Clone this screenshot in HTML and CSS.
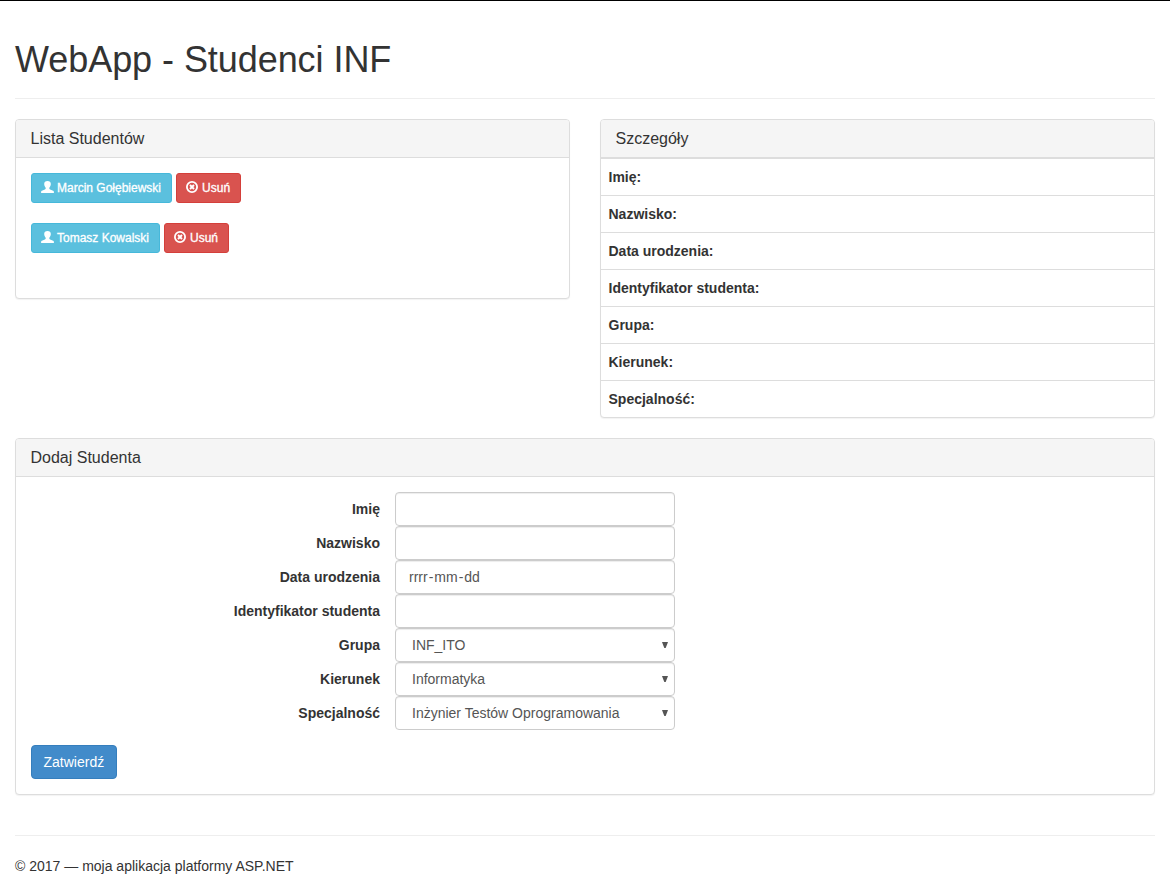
FILE: index.html
```html
<!DOCTYPE html>
<html lang="pl">
<head>
<meta charset="utf-8">
<title>WebApp - Studenci INF</title>
<link rel="stylesheet" href="styles.css">
</head>
<body>
<svg class="sprite" aria-hidden="true">
  <symbol id="user" viewBox="0 0 13 12"><path d="M6.5 0C8.6 0 9.9 1.2 9.8 3.1C9.7 4.7 9.2 5.9 8.3 6.7V7.6C8.3 8.1 8.6 8.4 9.1 8.6L11.5 9.5C12.4 9.8 12.9 10.3 12.9 11V12H.1V11C.1 10.3.6 9.8 1.5 9.5L3.9 8.6C4.4 8.4 4.7 8.1 4.7 7.6V6.7C3.8 5.9 3.3 4.7 3.2 3.1C3.1 1.2 4.4 0 6.5 0Z" fill="currentColor"/></symbol>
  <symbol id="remove" viewBox="0 0 12 12"><circle cx="6" cy="6" r="5.1" fill="none" stroke="currentColor" stroke-width="1.8"/><path d="M4 4L8 8M8 4L4 8" stroke="currentColor" stroke-width="1.9"/></symbol>
</svg>
<div class="container">
  <header class="page-header"><h1>WebApp - Studenci INF</h1></header>
  <div class="row">
    <section class="panel">
      <h3 class="panel-heading">Lista Studentów</h3>
      <div class="panel-body student-list">
        <div class="student">
          <button class="btn btn-sm btn-info"><svg class="icon icon-user"><use href="#user"/></svg><span class="btn-text">Marcin Gołębiewski</span></button>
          <button class="btn btn-sm btn-danger"><svg class="icon"><use href="#remove"/></svg><span class="btn-text">Usuń</span></button>
        </div>
        <div class="student">
          <button class="btn btn-sm btn-info"><svg class="icon icon-user"><use href="#user"/></svg><span class="btn-text">Tomasz Kowalski</span></button>
          <button class="btn btn-sm btn-danger"><svg class="icon"><use href="#remove"/></svg><span class="btn-text">Usuń</span></button>
        </div>
      </div>
    </section>
    <section class="panel">
      <h3 class="panel-heading">Szczegóły</h3>
      <div class="details">
        <div class="detail">Imię:</div>
        <div class="detail">Nazwisko:</div>
        <div class="detail">Data urodzenia:</div>
        <div class="detail">Identyfikator studenta:</div>
        <div class="detail">Grupa:</div>
        <div class="detail">Kierunek:</div>
        <div class="detail">Specjalność:</div>
      </div>
    </section>
  </div>
  <section class="panel">
    <h3 class="panel-heading">Dodaj Studenta</h3>
    <form class="panel-body">
      <div class="form-row"><label class="label" for="imie">Imię</label><input class="control" id="imie"></div>
      <div class="form-row"><label class="label" for="nazwisko">Nazwisko</label><input class="control" id="nazwisko"></div>
      <div class="form-row"><span class="label">Data urodzenia</span><div class="control date"><span class="date-field">rrrr</span>-<span class="date-field">mm</span>-<span class="date-field">dd</span></div></div>
      <div class="form-row"><label class="label" for="ident">Identyfikator studenta</label><input class="control" id="ident"></div>
      <div class="form-row"><span class="label">Grupa</span><div class="control select">INF_ITO<svg class="arrow" viewBox="0 0 6 6"><path d="M0 0H6L3.7 6H2.3Z" fill="currentColor"/></svg></div></div>
      <div class="form-row"><span class="label">Kierunek</span><div class="control select">Informatyka<svg class="arrow" viewBox="0 0 6 6"><path d="M0 0H6L3.7 6H2.3Z" fill="currentColor"/></svg></div></div>
      <div class="form-row"><span class="label">Specjalność</span><div class="control select">Inżynier Testów Oprogramowania<svg class="arrow" viewBox="0 0 6 6"><path d="M0 0H6L3.7 6H2.3Z" fill="currentColor"/></svg></div></div>
      <button class="btn btn-primary" type="button">Zatwierdź</button>
    </form>
  </section>
  <footer class="footer">© 2017 — moja aplikacja platformy ASP.NET</footer>
</div>
</body>
</html>
```
FILE: styles.css
```css
* { box-sizing: border-box; }
body {
  margin: 0;
  height: 886px;
  overflow: hidden;
  border-top: 1px solid #000;
  background: #fff;
  color: #333;
  font: 14px/20px "Liberation Sans", Arial, sans-serif;
}
h1, h3 { margin: 0; font-weight: 400; }
.sprite { display: none; }
.container { padding: 0 15px; }
.page-header {
  height: 98px;
  padding-top: 39px;
  border-bottom: 1px solid #eee;
  margin-bottom: 20px;
}
.page-header h1 { font-size: 36px; line-height: 40px; letter-spacing: -.06px; }
.row {
  display: grid;
  grid-template-columns: 1fr 1fr;
  gap: 30px;
  align-items: start;
  margin-bottom: 20px;
}
.panel {
  border: 1px solid #ddd;
  border-radius: 4px;
  background: #fff;
  box-shadow: 0 1px 1px rgba(0, 0, 0, .05);
}
.panel-heading {
  height: 38px;
  padding: 10px 14.5px;
  border-bottom: 1px solid #ddd;
  border-radius: 3px 3px 0 0;
  background: #f5f5f5;
  font-size: 16px;
  line-height: 18px;
}
.panel-body { padding: 15px; }
.student-list {
  display: flex;
  flex-direction: column;
  gap: 20px;
  height: 140px;
}
.student { display: flex; gap: 4px; }
.btn {
  display: inline-flex;
  align-items: center;
  height: 34px;
  padding: 0 12px;
  border: 1px solid transparent;
  border-radius: 4px;
  color: #fff;
  font: 14px/20px "Liberation Sans", Arial, sans-serif;
}
.btn-sm {
  height: 30px;
  padding: 0 10px 0 9px;
  border-radius: 3px;
  font-size: 12px;
  line-height: 18px;
}
.btn-info { background: #5bc0de; border-color: #46b8da; }
.btn-danger { background: #d9534f; border-color: #d43f3a; }
.btn-primary { margin-top: 15px; padding: 0 11.5px; background: #428bca; border-color: #357ebd; }
.icon { width: 12px; height: 12px; margin: 0 4px 2px 0; }
.icon-user { width: 13px; margin-right: 3px; }
.btn-text { -webkit-text-stroke: .3px currentColor; }
.detail {
  height: 37px;
  padding: 8px 7.5px;
  border-top: 1px solid #ddd;
  font-weight: 700;
}
.form-row {
  display: grid;
  grid-template-columns: 349px 280px;
  column-gap: 15px;
  height: 34px;
}
.label { padding-top: 7px; text-align: right; font-weight: 700; }
.control {
  width: 280px;
  height: 34px;
  padding: 6px 12px;
  border: 1px solid #ccc;
  border-radius: 4px;
  background: #fff;
  box-shadow: inset 0 1px 1px rgba(0, 0, 0, .075);
  color: #555;
  font: 14px/20px "Liberation Sans", Arial, sans-serif;
}
.date-field { padding: 0 1px; }
.select {
  display: flex;
  align-items: center;
  justify-content: space-between;
  padding: 6px 6px 6px 16px;
}
.arrow { width: 6px; height: 6px; }
.footer {
  margin-top: 40px;
  padding-top: 20px;
  border-top: 1px solid #eee;
}
```
